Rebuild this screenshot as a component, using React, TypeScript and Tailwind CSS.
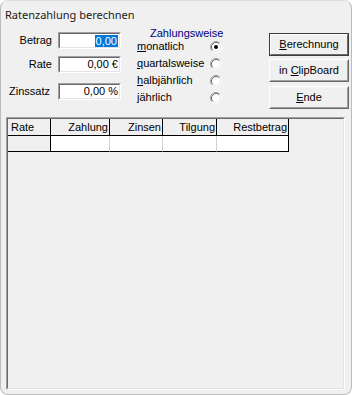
import React from "react";

function Radio({ checked }: { checked?: boolean }) {
  return (
    <svg width="12" height="12" viewBox="0 0 12 12">
      <circle cx="6" cy="6" r="5" fill="#ffffff" />
      <path d="M2.11 9.89 A5.5 5.5 0 0 1 9.89 2.11" fill="none" stroke="#a0a0a0" strokeWidth="1" />
      <path d="M9.89 2.11 A5.5 5.5 0 0 1 2.11 9.89" fill="none" stroke="#ffffff" strokeWidth="1" />
      <path d="M2.82 9.18 A4.5 4.5 0 0 1 9.18 2.82" fill="none" stroke="#696969" strokeWidth="1" />
      <path d="M9.18 2.82 A4.5 4.5 0 0 1 2.82 9.18" fill="none" stroke="#e3e3e3" strokeWidth="1" />
      {checked && <circle cx="6" cy="6" r="2" fill="#000000" />}
    </svg>
  );
}

function Field({ children }: { children: React.ReactNode }) {
  return (
    <div className="w-[63px] h-[17px] border border-t-[#a0a0a0] border-l-[#a0a0a0] border-r-white border-b-white">
      <div className="w-full h-full bg-white border border-t-[#696969] border-l-[#696969] border-r-[#e3e3e3] border-b-[#e3e3e3] flex items-center justify-end pr-[1px]">
        {children}
      </div>
    </div>
  );
}

function Btn({ children, def }: { children: React.ReactNode; def?: boolean }) {
  return (
    <div
      className={
        def
          ? "w-[80px] h-[23px] border border-[#3c3c3c]"
          : "w-[80px] h-[23px] border border-t-white border-l-white border-r-[#696969] border-b-[#696969]"
      }
    >
      <div
        className={
          def
            ? "w-full h-full border border-t-white border-l-white border-r-[#696969] border-b-[#696969] flex items-center justify-center"
            : "w-full h-full border border-t-[#f0f0f0] border-l-[#f0f0f0] border-r-[#a0a0a0] border-b-[#a0a0a0] flex items-center justify-center"
        }
      >
        {children}
      </div>
    </div>
  );
}

export default function App() {
  return (
    <div className="w-[352px] h-[395px] bg-white">
      <div className="w-[352px] h-[395px] bg-[#f0f0f0] border border-[#bcbcbc] border-t-[#dcdcdc] rounded-[8px] flex flex-col overflow-hidden text-[11px] leading-[13px] text-black font-['Liberation_Sans',Arial,sans-serif]">
        <div className="h-[26px] pl-[4px] flex items-center text-[11px] font-['Noto_Sans',sans-serif] text-[#1a1a1a]">
          Ratenzahlung berechnen
        </div>

        <div className="h-[90px] flex">
          {/* labels + inputs */}
          <div className="flex flex-col pt-[5px]">
            <div className="flex items-center h-[17px]">
              <div className="w-[52px] text-right pr-[1px]">Betrag</div>
              <div className="ml-[5px]">
                <Field>
                  <span className="bg-[#0078d7] text-white px-[1px] h-[12px] leading-[12px]">0,00</span>
                </Field>
              </div>
            </div>
            <div className="flex items-center h-[17px] mt-[7px]">
              <div className="w-[52px] text-right pr-[1px]">Rate</div>
              <div className="ml-[5px]">
                <Field>
                  <span>0,00 €</span>
                </Field>
              </div>
            </div>
            <div className="flex items-center h-[17px] mt-[10px]">
              <div className="w-[52px] text-right pr-[3px]">Zinssatz</div>
              <div className="ml-[5px]">
                <Field>
                  <span>0,00 %</span>
                </Field>
              </div>
            </div>
          </div>

          {/* Zahlungsweise */}
          <div className="ml-[16px] w-[85px] flex flex-col">
            <div className="h-[13px] pl-[13px] text-[#000080] whitespace-nowrap">Zahlungsweise</div>
            <div className="flex flex-col -mt-[2px]">
              <div className="h-[17px] flex items-center justify-between">
                <span>
                  <span className="underline">m</span>onatlich
                </span>
                <Radio checked />
              </div>
              <div className="h-[17px] flex items-center justify-between">
                <span>
                  <span className="underline">q</span>uartalsweise
                </span>
                <Radio />
              </div>
              <div className="h-[17px] flex items-center justify-between">
                <span>
                  <span className="underline">h</span>albjährlich
                </span>
                <Radio />
              </div>
              <div className="h-[17px] flex items-center justify-between">
                <span>jährlich</span>
                <Radio />
              </div>
            </div>
          </div>

          {/* buttons */}
          <div className="ml-[47px] flex flex-col pt-[6px]">
            <Btn def>
              <span>
                <span className="underline">B</span>erechnung
              </span>
            </Btn>
            <div className="mt-[3px]">
              <Btn>
                <span>
                  in <span className="underline">C</span>lipBoard
                </span>
              </Btn>
            </div>
            <div className="mt-[4px]">
              <Btn>
                <span>
                  <span className="underline">E</span>nde
                </span>
              </Btn>
            </div>
          </div>
        </div>

        {/* grid */}
        <div className="ml-[5px] w-[339px] h-[273px] border border-t-[#a0a0a0] border-l-[#a0a0a0] border-r-white border-b-white">
          <div className="w-full h-full border border-t-[#696969] border-l-[#696969] border-r-[#e3e3e3] border-b-[#e3e3e3]">
            <div className="flex">
              <div className="w-[43px] h-[17px] bg-[#f0f0f0] border-r border-b border-black pl-[3px] flex items-center">Rate</div>
              <div className="w-[59px] h-[17px] bg-[#f0f0f0] border-r border-b border-black pr-[1px] flex items-center justify-end">Zahlung</div>
              <div className="w-[53px] h-[17px] bg-[#f0f0f0] border-r border-b border-black pr-[1px] flex items-center justify-end">Zinsen</div>
              <div className="w-[54px] h-[17px] bg-[#f0f0f0] border-r border-b border-black pr-[1px] flex items-center justify-end">Tilgung</div>
              <div className="w-[72px] h-[17px] bg-[#f0f0f0] border-r border-b border-black pr-[1px] flex items-center justify-end">Restbetrag</div>
            </div>
            <div className="flex">
              <div className="w-[43px] h-[16px] bg-[#f0f0f0] border-r border-b border-black"></div>
              <div className="w-[59px] h-[16px] bg-white border-r border-r-[#d0d0d0] border-b border-b-black"></div>
              <div className="w-[53px] h-[16px] bg-white border-r border-r-[#d0d0d0] border-b border-b-black"></div>
              <div className="w-[54px] h-[16px] bg-white border-r border-r-[#d0d0d0] border-b border-b-black"></div>
              <div className="w-[72px] h-[16px] bg-white border-r border-b border-black"></div>
            </div>
          </div>
        </div>
      </div>
    </div>
  );
}
